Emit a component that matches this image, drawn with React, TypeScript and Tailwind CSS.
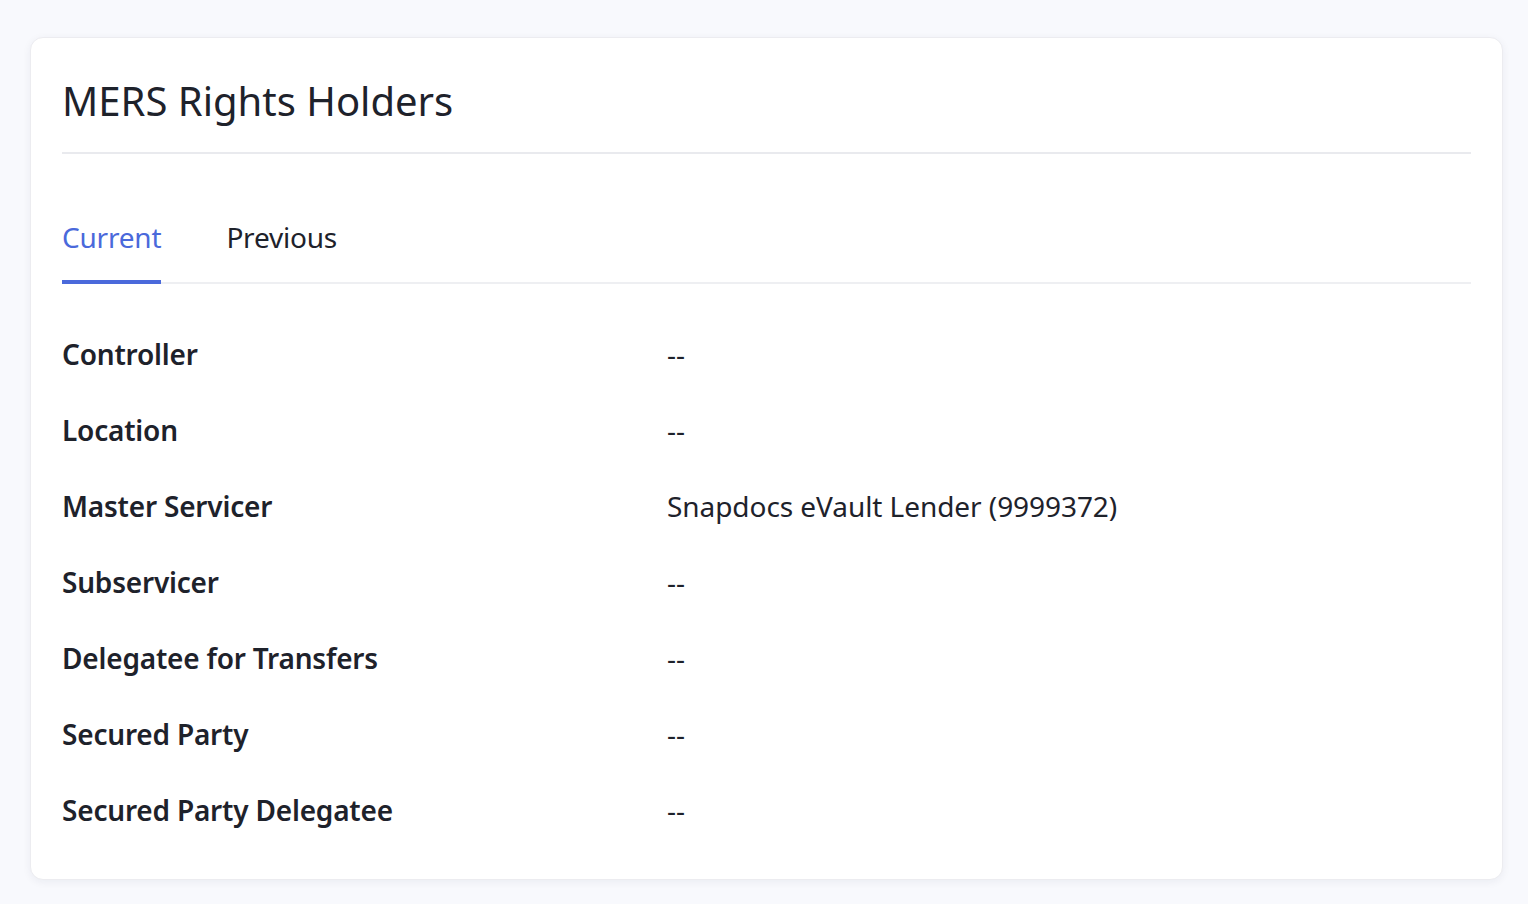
import React from "react";

const rows: [string, string][] = [
  ["Controller", "--"],
  ["Location", "--"],
  ["Master Servicer", "Snapdocs eVault Lender (9999372)"],
  ["Subservicer", "--"],
  ["Delegatee for Transfers", "--"],
  ["Secured Party", "--"],
  ["Secured Party Delegatee", "--"],
];

export default function App() {
  return (
    <div
      className="min-h-[904px] w-full bg-[#f8f9fd] pl-[30px] pr-[25px] pt-[37px] pb-[24px]"
      style={{ fontFamily: '"Noto Sans", "Open Sans", sans-serif' }}
    >
      <div className="w-[1473px] h-[843px] rounded-[13px] bg-white border border-[#ececf0] shadow-[0_2px_8px_rgba(20,30,60,0.06)] px-[31px] pb-[31px]">
        <h1 className="pt-[36px] text-[40px] leading-[54px] font-normal text-[#1e222b]">
          MERS Rights Holders
        </h1>
        <div className="mt-[24px] h-[2px] bg-[#e9eaee]" />
        <div className="mt-[63px] flex border-b-2 border-[#eeeff2] text-[28px] leading-[40px] tracking-[-0.2px]">
          <div className="relative pb-[25px] text-[#4a69db]">
            Current
            <div className="absolute left-0 right-0 bottom-[-2px] h-[4px] bg-[#4a69db]" />
          </div>
          <div className="ml-[65px] pb-[25px] text-[#1e222b]">Previous</div>
        </div>
        <div className="mt-[32px] flex flex-col">
          {rows.map(([label, value]) => (
            <div key={label} className="flex h-[76px] items-center text-[28px] text-[#1e222b]">
              <div className="w-[605px] font-semibold tracking-[-0.2px]">{label}</div>
              <div className="font-normal tracking-[-0.06px]">{value}</div>
            </div>
          ))}
        </div>
      </div>
    </div>
  );
}
